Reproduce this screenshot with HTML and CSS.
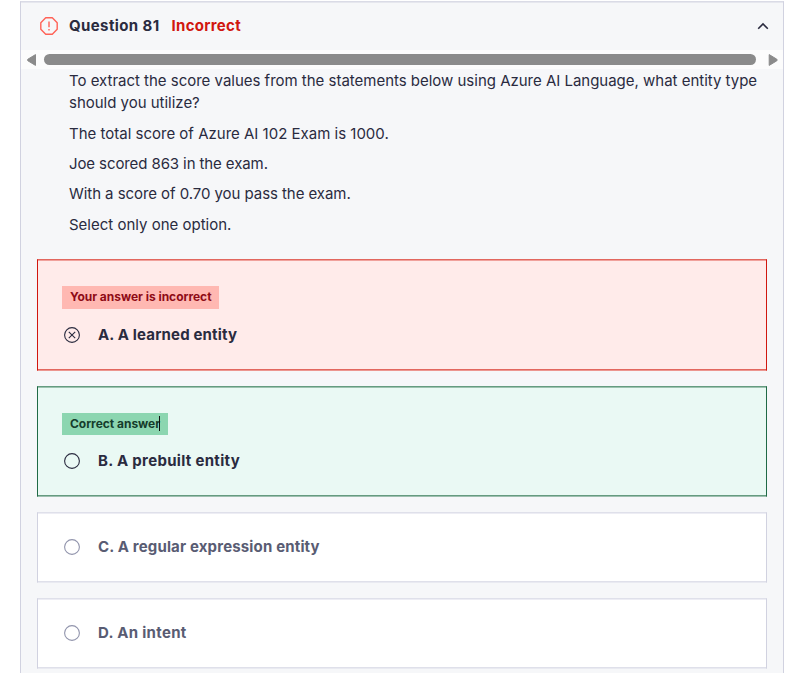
FILE: index.html
```
<!DOCTYPE html>
<html lang="en">
<head>
<meta charset="utf-8">
<title>Question 81</title>
<link rel="stylesheet" href="styles.css">
</head>
<body>
<main class="panel">
  <header class="head">
    <svg class="alert" width="18" height="18" viewBox="0 0 18 18"><path d="M5.7.8h6.6l4.9 4.9v6.6l-4.9 4.9H5.7L.8 12.3V5.7z" fill="none" stroke="#ff6257" stroke-width="1.4" stroke-linejoin="round"/><path d="M9 4.5v5.7M9 11.9v1.6" stroke="#ff6257" stroke-width="1.4"/></svg>
    <h1 class="title">Question 81</h1>
    <span class="status">Incorrect</span>
    <svg class="chevron" width="12" height="8" viewBox="0 0 12 8"><path d="M1.2 6.7L6 1.9l4.8 4.8" fill="none" stroke="#2a2b3f" stroke-width="1.6"/></svg>
  </header>
  <div class="scroll">
    <svg width="10" height="12" viewBox="0 0 10 12"><path d="M8.5.6v10.8L.9 6.8Q0 6 .9 5.2z" fill="#8b8b8b" stroke="#8b8b8b" stroke-linejoin="round"/></svg>
    <div class="thumb"></div>
    <svg width="10" height="12" viewBox="0 0 10 12"><path d="M1.2.6v10.8l7.6-4.6Q9.7 6 8.8 5.2z" fill="#8b8b8b" stroke="#8b8b8b" stroke-linejoin="round"/></svg>
  </div>
  <section class="prompt">
    <p class="question">To extract the score values from the statements below using Azure AI Language, what entity type<br>should you utilize?</p>
    <p>The total score of Azure AI 102 Exam is 1000.</p>
    <p class="tight">Joe scored 863 in the exam.</p>
    <p class="snug">With a score of 0.70 you pass the exam.</p>
    <p>Select only one option.</p>
  </section>
  <section class="answers">
    <div class="answer wrong">
      <div class="badge">Your answer is incorrect</div>
      <div class="row"><svg class="radio" width="16" height="16" viewBox="0 0 16 16"><circle cx="8" cy="8" r="7.4"/><path d="M4.8 4.8l6.4 6.4M11.2 4.8l-6.4 6.4"/></svg><span class="label">A. A learned entity</span></div>
    </div>
    <div class="answer right">
      <div class="badge">Correct answer<i class="caret"></i></div>
      <div class="row"><svg class="radio" width="16" height="16" viewBox="0 0 16 16"><circle cx="8" cy="8" r="7.4"/></svg><span class="label loose">B. A prebuilt entity</span></div>
    </div>
    <div class="answer plain">
      <div class="row"><svg class="radio" width="16" height="16" viewBox="0 0 16 16"><circle cx="8" cy="8" r="7.4"/></svg><span class="label">C. A regular expression entity</span></div>
    </div>
    <div class="answer plain">
      <div class="row"><svg class="radio" width="16" height="16" viewBox="0 0 16 16"><circle cx="8" cy="8" r="7.4"/></svg><span class="label loose">D. An intent</span></div>
    </div>
  </section>
</main>
</body>
</html>
```
FILE: styles.css
```
* { box-sizing: border-box; }
body {
  margin: 0;
  height: 673px;
  overflow: hidden;
  background: #fff;
  color: #2a2b3f;
  font-family: Inter, "Liberation Sans", sans-serif;
  font-size: 15px;
}
.panel {
  margin: 1px 22px 0 20px;
  height: 680px;
  background: #f6f7f9;
  border: 1px solid #d1d2e0;
  border-top-color: #dadbe6;
  box-shadow: inset 0 1px #e6e7ee;
}
.head {
  height: 48px;
  display: flex;
  align-items: center;
  padding: 0 14px 0 19px;
}
.title { margin: 0 0 0 11px; padding-bottom: 2px; font-size: 15px; font-weight: 700; letter-spacing: .39px; }
.status { margin-left: 12px; padding-bottom: 2px; font-weight: 700; letter-spacing: .3px; color: #d1170f; }
.chevron { margin-left: auto; }
.scroll {
  height: 19px;
  background: #fcfcfc;
  display: flex;
  align-items: center;
  padding: 0 5px 0 6px;
}
.thumb { flex: 1; height: 11px; margin: 0 12px 0 7px; border-radius: 6px; background: #8b8b8b; }
.prompt { padding: .8px 0 0 48px; height: 190px; line-height: 22.4px; white-space: nowrap; }
.prompt p { margin: 0 0 8px; }
.question { letter-spacing: -.015px; }
.tight { letter-spacing: -.1px; }
.snug { letter-spacing: -.06px; }
.answers {
  display: flex;
  flex-direction: column;
  gap: 15px;
  padding: 0 16px;
}
.answer { border: 1px solid; padding: 26px 24px 0; font-weight: 700; white-space: nowrap; }
.wrong {
  height: 112px;
  background: #ffebea;
  border-color: #e2675f #d1170f #ec9690;
  box-shadow: inset 0 1px #f0a19c, inset 0 -1px #e2675f;
}
.right {
  height: 111px;
  background: #eaf9f4;
  border-color: #659b80 #206a46 #9dbfaf;
  box-shadow: inset 0 1px #9dc3b0, inset 0 -1px #659b80;
}
.plain {
  height: 71px;
  padding-top: 23px;
  background: #fff;
  border-color: #dfe0ea #d1d2e0 #e9eaf1;
  box-shadow: inset 0 1px #ededf4, inset 0 -1px #dfe0ea;
  color: #595c73;
}
.badge {
  position: relative;
  width: 157px;
  height: 23px;
  padding-left: 8px;
  margin-bottom: 15px;
  font-size: 12px;
  line-height: 22px;
  letter-spacing: -.03px;
  background: #ffb8b2;
  color: #8e0b16;
}
.right .badge { width: 106px; height: 22px; background: #8cd6b0; color: #153d2c; }
.caret { position: absolute; left: 97px; top: 3px; width: 1px; height: 15px; background: #111; }
.row { display: flex; align-items: center; height: 22px; }
.label { padding-bottom: 2px; letter-spacing: .16px; }
.loose { letter-spacing: .31px; }
.radio { margin: 0 18px 0 2px; fill: none; stroke: #2a2b3f; stroke-width: 1.1; }
.plain .radio { stroke: #9194ac; }
```
